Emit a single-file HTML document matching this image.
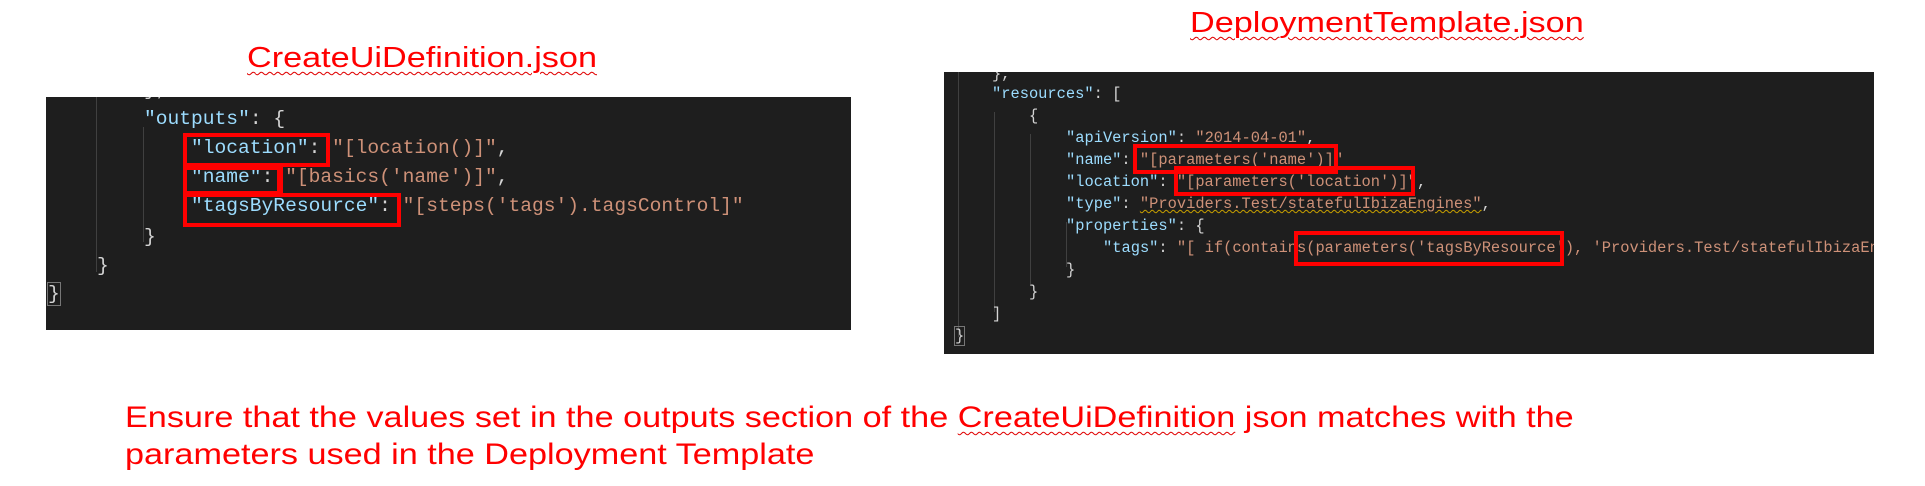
<!DOCTYPE html>
<html><head><meta charset="utf-8"><style>
body{margin:0;width:1925px;height:486px;background:#fff;position:relative;overflow:hidden;font-family:"Liberation Sans",sans-serif}
.t{position:absolute;color:#ff0000;white-space:nowrap;transform-origin:0 0}
.u{text-decoration:underline wavy #e00000 1px;text-underline-offset:4px}
.p{position:absolute;background:#1e1e1e;overflow:hidden}
.l{position:absolute;white-space:pre;font-family:"Liberation Mono",monospace;color:#d4d4d4}
.k{color:#9cdcfe}.s{color:#ce9178}
.b{position:absolute;border:4px solid #ff0000;box-sizing:border-box}
.g{position:absolute;width:1px;background:#404040}
</style></head><body>
<div class="t u" style="left:247px;top:42px;font-size:29px;transform:scaleX(1.18)">CreateUiDefinition.json</div>
<div class="t u" style="left:1190px;top:7px;font-size:29px;transform:scaleX(1.18)">DeploymentTemplate.json</div>

<div class="p" style="left:46px;top:97px;width:805px;height:233px">
 <div class="g" style="left:50px;top:0;height:175px"></div>
 <div class="g" style="left:97px;top:30px;height:115px"></div>
 <div class="l" style="left:98px;top:-18px;font-size:19.6px">},</div>
 <div class="l" style="left:98px;top:11px;font-size:19.6px"><span class="k">"outputs"</span>: {</div>
 <div class="l" style="left:145px;top:40px;font-size:19.6px"><span class="k">"location"</span>: <span class="s">"[location()]"</span>,</div>
 <div class="l" style="left:145px;top:69px;font-size:19.6px"><span class="k">"name"</span>: <span class="s">"[basics('name')]"</span>,</div>
 <div class="l" style="left:145px;top:98px;font-size:19.6px"><span class="k">"tagsByResource"</span>: <span class="s">"[steps('tags').tagsControl]"</span></div>
 <div class="l" style="left:98px;top:129px;font-size:19.6px">}</div>
 <div class="l" style="left:51px;top:158px;font-size:19.6px">}</div>
 <div class="l" style="left:2px;top:186px;font-size:19.6px;outline:1px solid #777">}</div>
 <div class="b" style="left:137px;top:36px;width:147px;height:34px"></div>
 <div class="b" style="left:137px;top:69px;width:98px;height:29px"></div>
 <div class="b" style="left:233px;top:69px;width:4px;height:29px;border-width:0 0 0 4px"></div>
 <div class="b" style="left:137px;top:96px;width:218px;height:34px"></div>
</div>

<div class="p" style="left:944px;top:72px;width:930px;height:282px">
 <div class="g" style="left:14px;top:0;height:265px"></div>
 <div class="g" style="left:50px;top:40px;height:200px"></div>
 <div class="g" style="left:86px;top:62px;height:150px"></div>
 <div class="g" style="left:122px;top:150px;height:45px"></div>
 <div class="l" style="left:48px;top:-7px;font-size:15.4px">},</div>
 <div class="l" style="left:48px;top:13px;font-size:15.4px"><span class="k">"resources"</span>: [</div>
 <div class="l" style="left:85px;top:35px;font-size:15.4px">{</div>
 <div class="l" style="left:122px;top:57px;font-size:15.4px"><span class="k">"apiVersion"</span>: <span class="s">"2014-04-01"</span>,</div>
 <div class="l" style="left:122px;top:79px;font-size:15.4px"><span class="k">"name"</span>: <span class="s">"[parameters('name')]"</span></div>
 <div class="l" style="left:122px;top:101px;font-size:15.4px"><span class="k">"location"</span>: <span class="s">"[parameters('location')]"</span>,</div>
 <div class="l" style="left:122px;top:123px;font-size:15.4px"><span class="k">"type"</span>: <span class="s" style="text-decoration:underline wavy #c8a000 1px">"Providers.Test/statefulIbizaEngines"</span>,</div>
 <div class="l" style="left:122px;top:145px;font-size:15.4px"><span class="k">"properties"</span>: {</div>
 <div class="l" style="left:159px;top:167px;font-size:15.4px"><span class="k">"tags"</span>: <span class="s">"[ if(contains(parameters('tagsByResource'), 'Providers.Test/statefulIbizaEngines'</span></div>
 <div class="l" style="left:122px;top:189px;font-size:15.4px">}</div>
 <div class="l" style="left:85px;top:211px;font-size:15.4px">}</div>
 <div class="l" style="left:48px;top:233px;font-size:15.4px">]</div>
 <div class="l" style="left:11px;top:255px;font-size:15.4px;outline:1px solid #777">}</div>
 <div class="b" style="left:189px;top:72px;width:205px;height:30px"></div>
 <div class="b" style="left:230px;top:94px;width:241px;height:30px"></div>
 <div class="b" style="left:350px;top:159px;width:270px;height:35px"></div>
</div>

<div class="t" style="left:125px;top:399px;font-size:30px;line-height:37px;transform:scaleX(1.14)">Ensure that the values set in the outputs section of the <span class="u">CreateUiDefinition</span> json matches with the<br>parameters used in the Deployment Template</div>
</body></html>
